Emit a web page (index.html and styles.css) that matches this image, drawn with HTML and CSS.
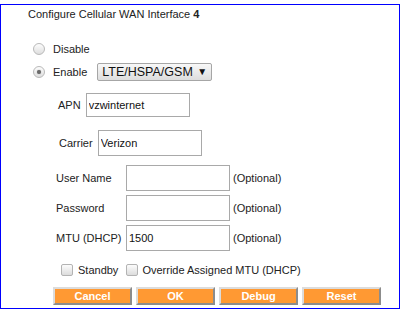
FILE: index.html
```html
<!DOCTYPE html>
<html lang="en">
    <head>
        <meta charset="utf-8"/>
        <title>Configure Cellular WAN Interface</title>
        <link rel="stylesheet" href="styles.css">
    </head>
    <body>
        <div class="panel">
            <div class="title">Configure Cellular WAN Interface <b>4</b></div>

            <label class="radio-row row-disable">
                <input type="radio" name="state" value="disable">
                <span>Disable</span>
            </label>
            <div class="radio-row row-enable">
                <label class="radio-label">
                    <input type="radio" name="state" value="enable" checked>
                    <span>Enable</span>
                </label>
                <span class="select-wrap">
                    <select class="mode">
                        <option>LTE/HSPA/GSM</option>
                    </select>
                </span>
            </div>

            <div class="field row-apn">
                <label>APN</label>
                <input type="text" class="text apn" value="vzwinternet">
            </div>
            <div class="field row-carrier">
                <label>Carrier</label>
                <input type="text" class="text carrier" value="Verizon">
            </div>

            <div class="opt-rows">
                <div class="opt">
                    <label>User Name</label>
                    <input type="text" class="text">
                    <span>(Optional)</span>
                </div>
                <div class="opt">
                    <label>Password</label>
                    <input type="password" class="text">
                    <span>(Optional)</span>
                </div>
                <div class="opt">
                    <label>MTU (DHCP)</label>
                    <input type="text" class="text" value="1500">
                    <span>(Optional)</span>
                </div>
            </div>

            <div class="checks">
                <label class="check"><input type="checkbox"><span>Standby</span></label>
                <label class="check"><input type="checkbox"><span>Override Assigned MTU (DHCP)</span></label>
            </div>

            <div class="buttons">
                <button class="btn">Cancel</button>
                <button class="btn">OK</button>
                <button class="btn">Debug</button>
                <button class="btn">Reset</button>
            </div>
        </div>
    </body>
</html>
```

FILE: styles.css
```css
html, body {
    margin: 0;
    padding: 0;
    font-family: "Liberation Sans", Arial, sans-serif;
    font-size: 11px;
    color: #222;
    background: #fff;
}

.panel {
    margin-top: 4px;
    width: 398px;
    height: 303px;
    border: 1px solid #0000ff;
    display: flex;
    flex-direction: column;
}

.title {
    padding: 3px 0 0 27px;
    line-height: 13px;
}

.title b {
    font-weight: bold;
}

/* radio rows */
.radio-row {
    display: flex;
    align-items: center;
    height: 20px;
    padding-left: 32px;
}

.row-disable {
    margin-top: 18px;
}

.row-enable {
    margin-top: 3px;
}

.radio-label {
    display: flex;
    align-items: center;
}

input[type="radio"] {
    appearance: none;
    -webkit-appearance: none;
    margin: 0 8px 0 0;
    width: 12px;
    height: 12px;
    border-radius: 50%;
    border: 1px solid #b9b9b9;
    background: linear-gradient(#fdfdfd, #dedede);
    box-sizing: border-box;
    position: relative;
}

input[type="radio"]:checked::after {
    content: "";
    position: absolute;
    left: 3px;
    top: 3px;
    width: 4px;
    height: 4px;
    border-radius: 50%;
    background: #6a6a6a;
    box-shadow: 0 0 1px #888;
}

.select-wrap {
    position: relative;
    margin-left: 10px;
    display: inline-block;
}

.select-wrap::after {
    content: "\25BC";
    position: absolute;
    right: 5px;
    top: 3px;
    font-size: 10px;
    color: #111;
    pointer-events: none;
}

select.mode {
    appearance: none;
    -webkit-appearance: none;
    width: 115px;
    height: 18px;
    margin: 0;
    padding: 0 0 0 4px;
    font-family: "Liberation Sans", Arial, sans-serif;
    font-size: 12.5px;
    color: #111;
    border: 1px solid #a6a6a6;
    border-radius: 2px;
    background: linear-gradient(#f8f8f8, #dddddd);
}

/* text fields */
.text {
    box-sizing: border-box;
    width: 104px;
    height: 26px;
    margin: 0;
    padding: 0 2px;
    border: 1px solid #a9a9a9;
    font-family: "Liberation Sans", Arial, sans-serif;
    font-size: 11px;
    color: #111;
    background: #fff;
}

.field {
    display: flex;
    align-items: center;
    gap: 5px;
}

.row-apn {
    margin-top: 11px;
    padding-left: 57px;
}

.row-apn .text {
    height: 24px;
}

.row-carrier {
    margin-top: 13px;
    padding-left: 58px;
}

.opt-rows {
    margin-top: 9px;
    padding-left: 55px;
    display: flex;
    flex-direction: column;
    gap: 4px;
}

.opt {
    display: flex;
    align-items: center;
}

.opt label {
    width: 70px;
}

.opt span {
    margin-left: 3px;
}

/* checkboxes */
.checks {
    margin-top: 11px;
    padding-left: 60px;
    height: 16px;
    display: flex;
    align-items: center;
    gap: 8px;
}

.check {
    display: flex;
    align-items: center;
}

input[type="checkbox"] {
    appearance: none;
    -webkit-appearance: none;
    margin: 0 5px 0 0;
    width: 12px;
    height: 12px;
    box-sizing: border-box;
    border: 1px solid #b3b3b3;
    border-radius: 2px;
    background: linear-gradient(#fcfcfc, #dcdcdc);
}

.check + .check input[type="checkbox"] {
    margin-right: 4px;
}

/* buttons */
.buttons {
    margin-top: 9px;
    padding-left: 52px;
    display: flex;
    gap: 4px;
}

.btn {
    box-sizing: border-box;
    width: 79px;
    height: 18px;
    margin: 0;
    padding: 0;
    background: #ff9933;
    border: 2px solid;
    border-color: #dcdcdc #8c8c8c #8c8c8c #dcdcdc;
    color: #fff;
    font-family: "Liberation Sans", Arial, sans-serif;
    font-size: 11px;
    font-weight: bold;
    cursor: pointer;
}
```
